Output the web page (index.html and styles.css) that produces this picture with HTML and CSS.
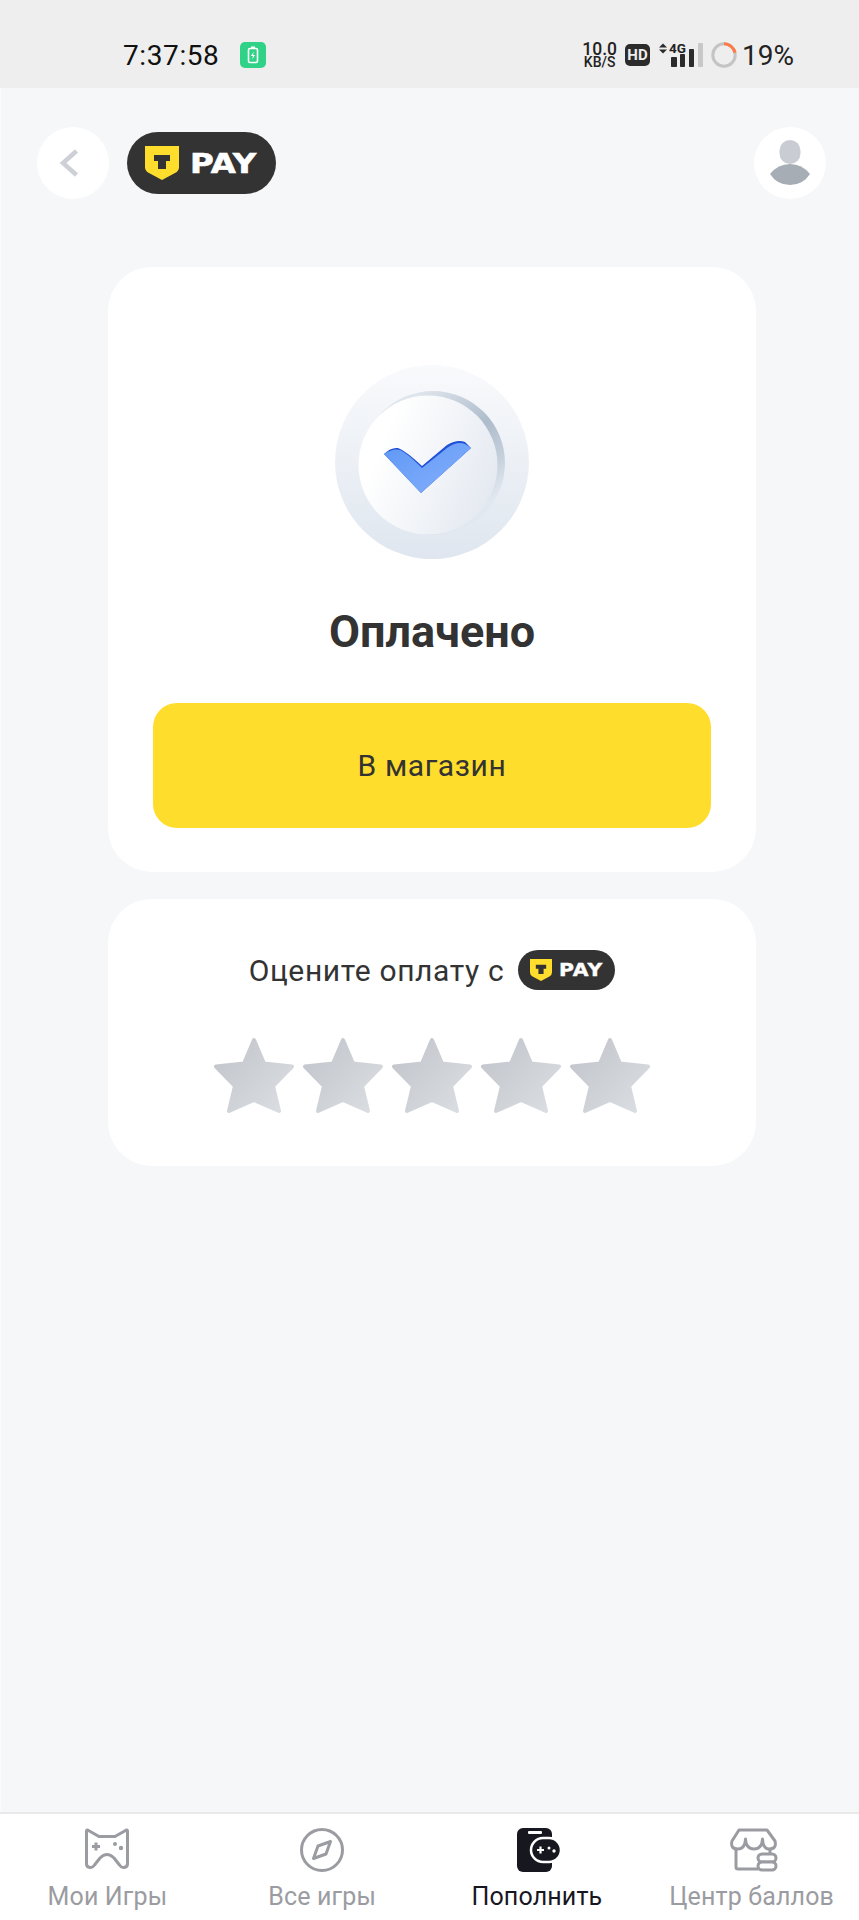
FILE: index.html
```html
<!DOCTYPE html>
<html lang="ru">
<head>
  <meta charset="UTF-8" />
  <meta name="viewport" content="width=device-width, initial-scale=1.0"/>
  <title>T-Pay</title>
  <link rel="stylesheet" href="styles.css">
</head>
<body>

  <!-- Status bar -->
  <div class="status-bar">
    <div class="status-left">
      <span class="clock">7:37:58</span>
      <svg class="battery-badge" width="26" height="26" viewBox="0 0 26 26">
        <rect width="26" height="26" rx="5" fill="#2fd287"/>
        <rect x="8.500" y="6.500" width="9" height="14" rx="1.500" fill="none" stroke="#fff" stroke-width="1.600"/>
        <rect x="11" y="4.500" width="4" height="2" fill="#fff"/>
        <path d="M13.800 9.500 L11 14 H13 L12.200 17.500 L15 13 H13z" fill="#fff"/>
      </svg>
    </div>
    <div class="status-right">
      <div class="speed"><span>10.0</span><span class="speed-unit">KB/S</span></div>
      <span class="hd">HD</span>
      <div class="signal">
        <svg width="45" height="24" viewBox="0 0 45 24">
          <path d="M1 4.500 L5 0.500 L9 4.500z M1 6.500 L5 10.500 L9 6.500z" fill="#2b2b2b"/>
          <rect x="13" y="14" width="6" height="10" rx="0.800" fill="#2b2b2b"/>
          <rect x="22" y="11" width="5" height="13" rx="0.800" fill="#2b2b2b"/>
          <rect x="31" y="6" width="5" height="18" rx="0.800" fill="#2b2b2b"/>
          <rect x="40" y="0" width="5" height="24" rx="0.800" fill="#c8c8c8"/>
        </svg>
        <span class="signal-4g">4G</span>
      </div>
      <svg width="26" height="26" viewBox="0 0 26 26">
        <circle cx="13" cy="13" r="11.200" fill="none" stroke="#c4c4c4" stroke-width="3"/>
        <path d="M13 1.800 A11.200 11.200 0 0 1 24 10.800" fill="none" stroke="#ff7a45" stroke-width="3"/>
      </svg>
      <span class="battery-text">19%</span>
    </div>
  </div>

  <div class="page">
    <!-- Header -->
    <div class="top-nav">
      <div class="top-left">
        <div class="round-btn">
          <svg class="back-icon" width="20" height="30" viewBox="0 0 20 30">
            <path d="M17.500 3 L4 15 L17.500 27" fill="none" stroke="#cdd0d6" stroke-width="4.500"/>
          </svg>
        </div>
        <div class="tpay">
          <svg class="tpay-shield" viewBox="0 0 34 34">
            <path d="M0 0 H34 V21 Q34 25 30 27 L17 34 L4 27 Q0 25 0 21z" fill="#ffdd2d"/>
            <path d="M9 9 H25 V15 H21 V23 H13 V15 H9z" fill="#333"/>
          </svg>
          <span class="tpay-text">PAY</span>
        </div>
      </div>
      <div class="round-btn">
        <svg width="40" height="46" viewBox="0 0 40 46">
          <rect x="9.500" y="0" width="21" height="24" rx="10.500" fill="#c9cdd3"/>
          <path d="M0 34 Q8 24 20 24 Q32 24 40 34 Q33 45 20 45 Q7 45 0 34z" fill="#a7adb5"/>
        </svg>
      </div>
    </div>

    <!-- Main -->
    <div class="main-content">
      <div class="card card-result">
        <svg class="done-icon" width="194" height="194" viewBox="0 0 194 194">
          <defs>
            <linearGradient id="outerGrad" x1="0.500" y1="0" x2="0.500" y2="1">
              <stop offset="0" stop-color="#f9fafc"/>
              <stop offset="1" stop-color="#dfe6ef"/>
            </linearGradient>
            <linearGradient id="innerGrad" x1="0.050" y1="0.350" x2="1" y2="0.750">
              <stop offset="0.100" stop-color="#ffffff"/>
              <stop offset="1" stop-color="#e3e8f0"/>
            </linearGradient>
            <linearGradient id="rimGrad" x1="0.200" y1="0.100" x2="0.800" y2="0.900">
              <stop offset="0.050" stop-color="#dfe5ec"/>
              <stop offset="0.500" stop-color="#aebccb"/>
              <stop offset="0.750" stop-color="#c5d0dc"/>
              <stop offset="0.950" stop-color="#e2e8f0"/>
            </linearGradient>
            <linearGradient id="tickGrad" x1="0" y1="0" x2="1" y2="1">
              <stop offset="0" stop-color="#5f98f6"/>
              <stop offset="1" stop-color="#86b0fb"/>
            </linearGradient>
          </defs>
          <circle cx="97" cy="97" r="97" fill="url(#outerGrad)"/>
          <circle cx="98" cy="98" r="72" fill="url(#rimGrad)"/>
          <circle cx="93" cy="100" r="69.500" fill="url(#innerGrad)"/>
          <path d="M49 89 Q56 82 63 83 Q71 86 87 101 L112 80 Q122 74 130 77 L136 83 L86 128z" fill="#1f50d8"/>
          <path d="M49 89 Q58 83 65 85 Q72 88 87 103 L112 83 Q122 76 130 79 L136 83 L86 128z" fill="url(#tickGrad)"/>
        </svg>
        <h1 class="result-title">Оплачено</h1>
        <button class="shop-btn">В магазин</button>
      </div>

      <div class="card card-rate">
        <div class="rate-row">
          <span>Оцените оплату с</span>
          <div class="tpay tpay-small">
            <svg class="tpay-shield" viewBox="0 0 34 34">
              <path d="M0 0 H34 V21 Q34 25 30 27 L17 34 L4 27 Q0 25 0 21z" fill="#ffdd2d"/>
              <path d="M9 9 H25 V15 H21 V23 H13 V15 H9z" fill="#333"/>
            </svg>
            <span class="tpay-text">PAY</span>
          </div>
        </div>
        <div class="stars">
          <svg class="star" viewBox="0 0 82 77">
            <defs>
              <linearGradient id="starGrad" x1="0.100" y1="0.200" x2="0.900" y2="0.900">
                <stop offset="0" stop-color="#c4c7cd"/>
                <stop offset="1" stop-color="#d9dde1"/>
              </linearGradient>
            </defs>
            <path id="starShape" d="M41 3 L51 26.500 L79 29.500 L60 49 L66 74 L41 63 L16 74 L22 49 L3 29.500 L31 26.500z" fill="url(#starGrad)" stroke="url(#starGrad)" stroke-width="4" stroke-linejoin="round"/>
          </svg>
          <svg class="star" viewBox="0 0 82 77"><use href="#starShape"/></svg>
          <svg class="star" viewBox="0 0 82 77"><use href="#starShape"/></svg>
          <svg class="star" viewBox="0 0 82 77"><use href="#starShape"/></svg>
          <svg class="star" viewBox="0 0 82 77"><use href="#starShape"/></svg>
        </div>
      </div>
    </div>
  </div>

  <!-- Bottom tabs -->
  <div class="tabs">
    <div class="tab">
      <svg width="44" height="44" viewBox="0 0 44 44">
        <path d="M1.500 3 Q1.500 1.500 3 2.200 L14 8.500 H30 L41 2.200 Q42.500 1.500 42.500 3 V36 Q42.500 39 39 39.500 Q36.500 40 34.500 37 L29 30 Q22 23 15 30 L9.500 37 Q7.500 40 5 39.500 Q1.500 39 1.500 36z" fill="none" stroke="#9b9ca1" stroke-width="3" stroke-linejoin="round"/>
        <path d="M7 18.500 H15 M11 14.500 V22.500" stroke="#9b9ca1" stroke-width="3" fill="none"/>
        <circle cx="30" cy="16" r="2" fill="#9b9ca1"/>
        <circle cx="36" cy="20" r="2.200" fill="#9b9ca1"/>
      </svg>
      <span>Мои Игры</span>
    </div>
    <div class="tab">
      <svg width="44" height="44" viewBox="0 0 44 44">
        <circle cx="22" cy="22" r="20.500" fill="none" stroke="#9b9ca1" stroke-width="3"/>
        <path d="M30.500 13.500 L26 26 L13.500 30.500 L18 18z" fill="none" stroke="#9b9ca1" stroke-width="3" stroke-linejoin="round"/>
      </svg>
      <span>Все игры</span>
    </div>
    <div class="tab tab-active">
      <svg class="tab-icon-shift" width="44" height="44" viewBox="0 0 44 44">
        <rect x="0" y="0" width="35" height="44" rx="6" fill="#17171f"/>
        <rect x="11" y="3" width="14" height="3" rx="1" fill="#fff"/>
        <rect x="14" y="10" width="30" height="24" rx="12" fill="#17171f" stroke="#fff" stroke-width="2.500"/>
        <path d="M20 22 H27 M23.500 18.500 V25.500" stroke="#fff" stroke-width="2.200" fill="none"/>
        <circle cx="32" cy="20" r="1.500" fill="#fff"/>
        <circle cx="37" cy="23" r="1.700" fill="#fff"/>
      </svg>
      <span>Пополнить</span>
    </div>
    <div class="tab">
      <svg class="tab-icon-shift" width="48" height="44" viewBox="0 0 48 44">
        <path d="M9 2 H37 L45 13 Q47 21 39 21 Q33 21 32.500 11 Q32 21 24 21 Q16 21 15.500 11 Q15 21 8 21 Q0 21 2 13z" fill="none" stroke="#9b9ca1" stroke-width="3" stroke-linejoin="round"/>
        <path d="M6 21 V39 Q6 41 8 41 H28 M40 21 V26" fill="none" stroke="#9b9ca1" stroke-width="3"/>
        <rect x="28" y="26" width="18" height="8" rx="4" fill="#fff" stroke="#9b9ca1" stroke-width="3"/>
        <rect x="28" y="34" width="18" height="8" rx="4" fill="#fff" stroke="#9b9ca1" stroke-width="3"/>
      </svg>
      <span>Центр баллов</span>
    </div>
  </div>

</body>
</html>
```

FILE: styles.css
```css
* {
  box-sizing: border-box;
}

html, body {
  margin: 0;
  padding: 0;
  width: 100%;
  height: 100%;
  overflow: hidden;
  font-family: Roboto, "Liberation Sans", sans-serif;
  background-color: #f6f7f9;
  color: #333;
}

body {
  display: flex;
  flex-direction: column;
  height: 1920px;
}

/* Status bar */
.status-bar {
  height: 88px;
  flex: none;
  background: #eeeeee;
  display: flex;
  justify-content: space-between;
  align-items: center;
  padding: 22px 65px 0 123px;
  color: #222;
}

.status-left {
  display: flex;
  align-items: center;
  gap: 21px;
}

.clock {
  font-size: 28px;
  letter-spacing: 0.6px;
  color: #111;
}

.status-right {
  display: flex;
  align-items: center;
  gap: 8px;
}

.speed {
  display: flex;
  flex-direction: column;
  align-items: center;
  font-size: 17.500px;
  line-height: 14px;
  font-weight: 500;
}

.speed-unit {
  font-size: 14px;
  line-height: 12px;
}

.hd {
  width: 25px;
  height: 22px;
  background: #2b2b2b;
  color: #eee;
  border-radius: 5px;
  font-size: 15px;
  font-weight: 700;
  line-height: 22px;
  text-align: center;
}

.signal {
  position: relative;
  width: 45px;
  height: 24px;
}

.signal-4g {
  position: absolute;
  left: 11px;
  top: -1px;
  font-size: 13.500px;
  font-weight: 700;
  line-height: 13px;
}

.battery-text {
  font-size: 28px;
  margin-left: -3px;
}

/* Header */
.page {
  flex: 1;
  display: flex;
  flex-direction: column;
  border-left: 1px solid #fbfbfc;
}

.top-nav {
  display: flex;
  justify-content: space-between;
  align-items: center;
  padding: 39px 33px 0 36px;
}

.top-left {
  display: flex;
  align-items: center;
  gap: 18px;
}

.round-btn {
  width: 72px;
  height: 72px;
  border-radius: 50%;
  background: #fff;
  display: flex;
  align-items: center;
  justify-content: center;
}

.back-icon {
  margin-right: 8px;
}

.tpay {
  width: 149px;
  height: 62px;
  border-radius: 31px;
  background: #333;
  display: flex;
  align-items: center;
  gap: 11px;
  padding-left: 18px;
}

.tpay-shield {
  width: 34px;
  height: 34px;
  flex: none;
}

.tpay-text {
  font-family: "DejaVu Sans", sans-serif;
  font-weight: 700;
  font-size: 27px;
  line-height: 1;
  color: #fff;
  -webkit-text-stroke: 0.6px #fff;
  transform: scaleX(1.2);
  transform-origin: left center;
}

.tpay-small {
  width: 97px;
  height: 40px;
  gap: 7px;
  padding-left: 12px;
}

.tpay-small .tpay-shield {
  width: 22px;
  height: 22px;
}

.tpay-small .tpay-text {
  font-size: 17px;
  -webkit-text-stroke: 0.4px #fff;
}

/* Cards */
.main-content {
  padding: 68px 103px 0 107px;
  display: flex;
  flex-direction: column;
  gap: 27px;
}

.card {
  background: #fff;
  border-radius: 44px;
  display: flex;
  flex-direction: column;
  align-items: center;
}

.card-result {
  height: 605px;
  padding-top: 98px;
}

.result-title {
  margin: 47px 0 0;
  font-size: 45px;
  line-height: 52px;
  font-weight: 700;
  color: #333;
}

.shop-btn {
  margin-top: 45px;
  width: 558px;
  height: 125px;
  border: none;
  border-radius: 24px;
  background: #ffdd2d;
  color: #333;
  font-family: inherit;
  font-size: 30px;
  letter-spacing: 0.6px;
}

.card-rate {
  height: 267px;
  padding-top: 51px;
}

.rate-row {
  display: flex;
  align-items: center;
  gap: 14px;
  font-size: 30px;
  letter-spacing: 0.65px;
}

.stars {
  display: flex;
  gap: 7px;
  margin-top: 47px;
}

.star {
  width: 82px;
  height: 77px;
}

/* Bottom tabs */
.tabs {
  height: 108px;
  flex: none;
  background: #fff;
  border-top: 2px solid #e9e9eb;
  display: grid;
  grid-template-columns: repeat(4, 1fr);
}

.tab {
  display: flex;
  flex-direction: column;
  align-items: center;
  padding-top: 14px;
  color: #9b9ca1;
  font-size: 25px;
  line-height: 30px;
  letter-spacing: 0.15px;
}

.tab span {
  margin-top: 10px;
  white-space: nowrap;
}

.tab-icon-shift {
  margin-left: 4px;
}

.tab-active {
  color: #17171f;
}
```
